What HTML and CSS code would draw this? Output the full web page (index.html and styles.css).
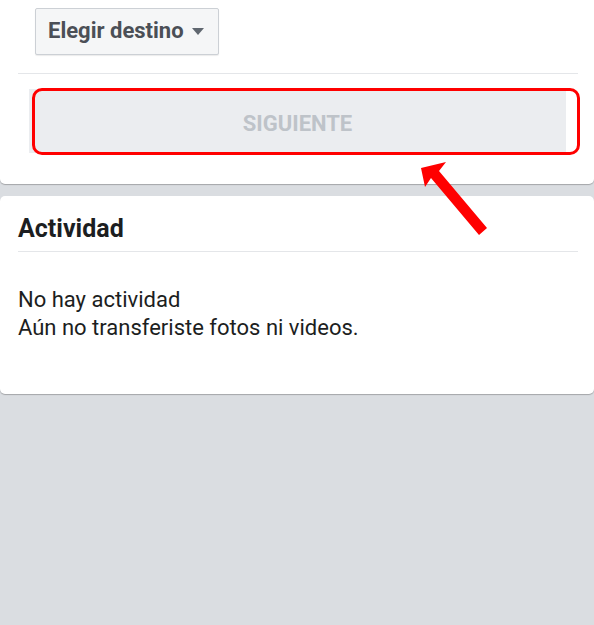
FILE: index.html
```html
<!DOCTYPE html>
<html lang="es">
<head>
<meta charset="utf-8">
<link rel="stylesheet" href="styles.css">
</head>
<body>
<div class="card card-top">
  <div class="dest-row">
    <button class="dropdown">Elegir destino <span class="caret"></span></button>
  </div>
  <div class="divider"></div>
  <div class="next-row">
    <button class="next">SIGUIENTE</button>
  </div>
</div>
<div class="card card-activity">
  <h2 class="title">Actividad</h2>
  <div class="divider"></div>
  <p class="empty">No hay actividad<br>Aún no transferiste fotos ni videos.</p>
</div>
<div class="highlight"></div>
<svg class="arrow" width="90" height="100" viewBox="0 0 90 100">
  <polygon fill="#ff0000" points="2,10 27,4 20,13 68,70 60,77 12,20 6,29"/>
</svg>
</body>
</html>
```
FILE: styles.css
```css
* { box-sizing: border-box; }
html, body { margin: 0; padding: 0; }
body {
  background: #dadde1;
  font-family: Roboto, "Noto Sans", sans-serif;
  width: 594px;
  height: 625px;
  position: relative;
  overflow: hidden;
}
.card {
  background: #fff;
  box-shadow: 0 1px 1px rgba(0,0,0,0.25);
}
.card-top {
  padding: 8px 16px 31px 18px;
  border-radius: 0 0 5px 5px;
}
.dest-row { padding-left: 17px; }
.dropdown {
  height: 47px;
  width: 184px;
  background: #f5f6f7;
  border: 1px solid #ccd0d5;
  border-radius: 2px;
  font-family: Roboto, sans-serif;
  font-weight: 700;
  font-size: 22px;
  color: #4b4f56;
  padding: 0 0 2px 12px;
  display: flex;
  align-items: center;
  gap: 8px;
  box-shadow: 0 1px 1px rgba(0,0,0,0.08);
}
.caret {
  width: 0; height: 0;
  border-left: 6px solid transparent;
  border-right: 6px solid transparent;
  border-top: 7px solid #606770;
  margin-top: 1px;
}
.divider {
  height: 1px;
  background: #e4e6e9;
}
.card-top .divider { margin-top: 18px; }
.next-row { padding: 15px 12px 0 11px; }
.next {
  width: 537px;
  height: 64px;
  background: #ebedf0;
  border: none;
  border-radius: 0;
  font-family: Roboto, sans-serif;
  font-weight: 700;
  font-size: 22px;
  color: #bec3c9;
  padding: 4px 0 0;
  display: block;
}
.card-activity {
  margin-top: 12px;
  border-radius: 5px;
  padding: 17px 16px 30px 18px;
  height: 198px;
}
.title {
  margin: 0;
  font-size: 25px;
  font-weight: 700;
  color: #1c1e21;
  line-height: 32px;
  padding-bottom: 6px;
}
.empty {
  margin: 34px 0 0;
  font-size: 22px;
  line-height: 28px;
  color: #1c1e21;
}
.highlight {
  position: absolute;
  left: 32px;
  top: 88px;
  width: 548px;
  height: 67px;
  border: 3px solid #ff0000;
  border-radius: 10px;
}
.arrow {
  position: absolute;
  left: 419px;
  top: 158px;
}
```
